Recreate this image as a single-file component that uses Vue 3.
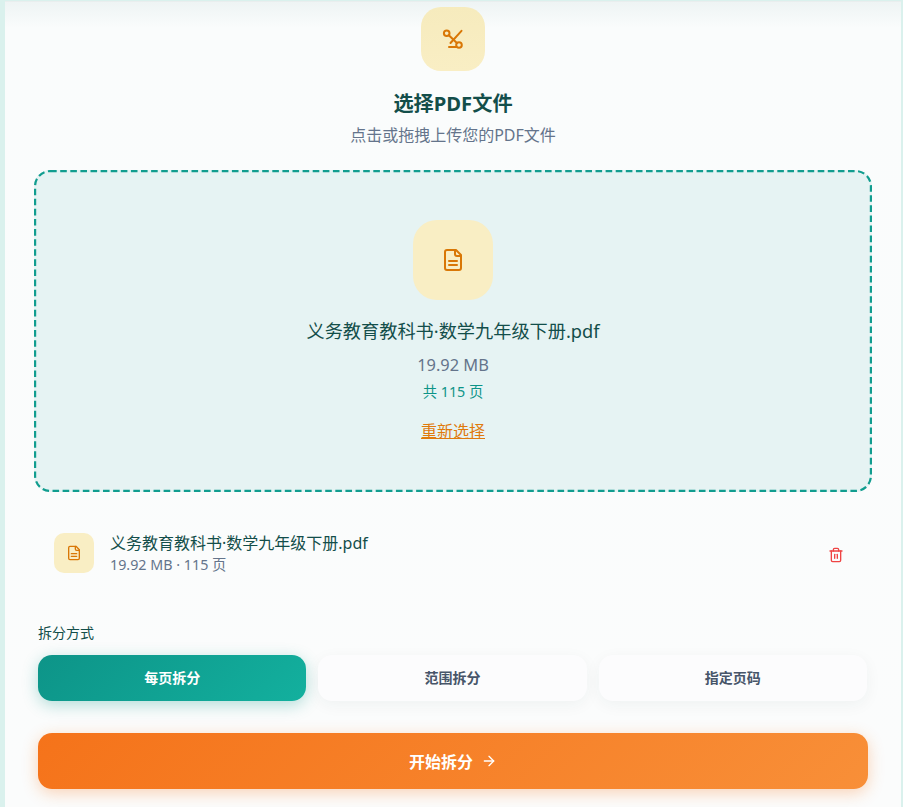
<script setup>
const modes = [
  { label: '每页拆分', active: true },
  { label: '范围拆分', active: false },
  { label: '指定页码', active: false }
]
</script>

<template>
  <div class="page">
    <main class="card">
      <header class="head">
        <div class="head-icon">
          <svg width="24" height="24" viewBox="0 0 24 24" fill="none" stroke="currentColor" stroke-width="2" stroke-linecap="round" stroke-linejoin="round">
            <circle cx="5.7" cy="6.3" r="2.8" />
            <circle cx="18" cy="18" r="2.8" />
            <path d="M20.5 3.8 9.5 16" />
            <path d="M7.8 8.3 15.9 16" />
            <path d="M8 20h7" />
          </svg>
        </div>
        <h1>选择PDF文件</h1>
        <p>点击或拖拽上传您的PDF文件</p>
      </header>

      <section class="drop">
        <svg class="drop-border" width="838" height="322" viewBox="0 0 838 322" fill="none">
          <rect x="1.1" y="1.1" width="835.8" height="319.8" rx="15" stroke="#119d8f" stroke-width="2.2" stroke-dasharray="6.6 3.5" />
        </svg>
        <div class="drop-icon">
          <svg width="24" height="24" viewBox="0 0 24 24" fill="none" stroke="currentColor" stroke-width="2" stroke-linecap="round" stroke-linejoin="round">
            <path d="M15 2H6a2 2 0 0 0-2 2v16a2 2 0 0 0 2 2h12a2 2 0 0 0 2-2V7Z" />
            <path d="M14 2v4a2 2 0 0 0 2 2h4" />
            <path d="M16 13H8" />
            <path d="M16 17H8" />
          </svg>
        </div>
        <div class="drop-name">义务教育教科书·数学九年级下册.pdf</div>
        <div class="drop-size">19.92 MB</div>
        <div class="drop-pages">共 115 页</div>
        <a class="drop-link">重新选择</a>
      </section>

      <section class="file">
        <div class="file-icon">
          <svg width="16" height="16" viewBox="0 0 24 24" fill="none" stroke="currentColor" stroke-width="2" stroke-linecap="round" stroke-linejoin="round">
            <path d="M15 2H6a2 2 0 0 0-2 2v16a2 2 0 0 0 2 2h12a2 2 0 0 0 2-2V7Z" />
            <path d="M14 2v4a2 2 0 0 0 2 2h4" />
            <path d="M16 13H8" />
            <path d="M16 17H8" />
          </svg>
        </div>
        <div class="file-text">
          <div class="file-name">义务教育教科书·数学九年级下册.pdf</div>
          <div class="file-meta">19.92 MB · 115 页</div>
        </div>
        <svg class="trash" width="16" height="16" viewBox="0 0 24 24" fill="none" stroke="currentColor" stroke-width="2" stroke-linecap="round" stroke-linejoin="round">
          <path d="M3 6h18" />
          <path d="M19 6v14a2 2 0 0 1-2 2H7a2 2 0 0 1-2-2V6" />
          <path d="M8 6V4a2 2 0 0 1 2-2h4a2 2 0 0 1 2 2v2" />
          <path d="M10 11v6" />
          <path d="M14 11v6" />
        </svg>
      </section>

      <section class="options">
        <div class="options-label">拆分方式</div>
        <div class="modes">
          <button v-for="m in modes" :key="m.label" class="mode" :class="{ active: m.active }">{{ m.label }}</button>
        </div>
        <button class="start">
          <span>开始拆分</span>
          <svg width="16" height="16" viewBox="0 0 24 24" fill="none" stroke="currentColor" stroke-width="2" stroke-linecap="round" stroke-linejoin="round">
            <path d="M5 12h14" />
            <path d="m12 5 7 7-7 7" />
          </svg>
        </button>
      </section>
    </main>
  </div>
</template>

<style>
html, body { margin: 0; background: #daf1ed; }
</style>

<style scoped>
.page {
  height: 807px;
  overflow: hidden;
  padding: 1px 2px 0 5px;
  box-sizing: border-box;
  background: #daf1ed;
  font-family: "Noto Sans", "Noto Sans CJK SC", sans-serif;
}
.card {
  height: 806px;
  box-sizing: border-box;
  padding: 5px 29px 0;
  background: linear-gradient(180deg, #eef4f4 0, #fafcfc 26px, #fbfcfc 100%);
  border-top: 1px solid #e9eeee;
}
.head { display: flex; flex-direction: column; align-items: center; }
.head-icon {
  width: 64px;
  height: 64px;
  border-radius: 20px;
  background: linear-gradient(180deg, #f6ebbd, #f9eec4);
  color: #d97706;
  display: flex;
  align-items: center;
  justify-content: center;
}
h1 {
  margin: 18px 0 0;
  font-size: 20.2px;
  line-height: 28px;
  font-weight: 700;
  color: #134e4a;
}
.head p {
  margin: 7px 0 0;
  font-size: 16px;
  line-height: 22px;
  color: #64748b;
}
.drop {
  position: relative;
  margin-top: 24px;
  height: 322px;
  box-sizing: border-box;
  border-radius: 16px;
  background: #e6f3f3;
  display: flex;
  flex-direction: column;
  align-items: center;
  padding-top: 50px;
}
.drop-border {
  position: absolute;
  inset: 0;
}
.drop-icon {
  width: 80px;
  height: 80px;
  border-radius: 24px;
  background: #f9eec4;
  color: #d97706;
  display: flex;
  align-items: center;
  justify-content: center;
}
.drop-name {
  margin-top: 17px;
  font-size: 18.2px;
  line-height: 28px;
  color: #134e4a;
}
.drop-size {
  margin-top: 8px;
  font-size: 16.4px;
  line-height: 24px;
  color: #64748b;
}
.drop-pages {
  margin-top: 5px;
  font-size: 14.3px;
  line-height: 20px;
  color: #0d9488;
}
.drop-link {
  margin-top: 17px;
  font-size: 16px;
  line-height: 24px;
  color: #e07a0c;
  text-decoration: underline;
}
.file {
  margin-top: 40px;
  padding: 0 28px 0 20px;
  display: flex;
  align-items: center;
}
.file-icon {
  align-self: flex-start;
  margin-top: 1px;
  width: 40px;
  height: 40px;
  border-radius: 10px;
  background: #f9eec4;
  color: #d97706;
  display: flex;
  align-items: center;
  justify-content: center;
}
.file-text { flex: 1; margin-left: 16px; }
.file-name {
  font-size: 16px;
  line-height: 22px;
  color: #134e4a;
}
.file-meta {
  margin-top: 1px;
  font-size: 14.3px;
  line-height: 20px;
  color: #64748b;
}
.trash { color: #ef4444; margin-top: 3px; }
.options { margin-top: 48px; padding: 0 4px; }
.options-label {
  font-size: 14px;
  line-height: 20px;
  color: #134e4a;
}
.modes {
  margin: 12px 1px 0 0;
  display: grid;
  grid-template-columns: repeat(3, 1fr);
  gap: 12px;
}
.mode {
  height: 46px;
  border: 0;
  border-radius: 14px;
  background: #fcfcfd;
  color: #475569;
  font: inherit;
  font-size: 14px;
  font-weight: 700;
  box-shadow: 0 4px 16px rgba(15, 60, 60, 0.05);
  padding: 0 0 2px;
}
.mode.active {
  background: linear-gradient(135deg, #0d9488, #13b09e);
  color: #fff;
  box-shadow: 0 4px 16px rgba(13, 148, 136, 0.3);
}
.start {
  margin-top: 32px;
  width: 100%;
  height: 56px;
  border: 0;
  border-radius: 14px;
  padding: 0 0 1px;
  background: linear-gradient(135deg, #f5731a, #f88f38);
  color: #fff;
  font: inherit;
  font-size: 16px;
  font-weight: 700;
  display: flex;
  align-items: center;
  justify-content: center;
  gap: 8px;
  box-shadow: 0 4px 16px rgba(249, 115, 22, 0.3);
}
</style>
